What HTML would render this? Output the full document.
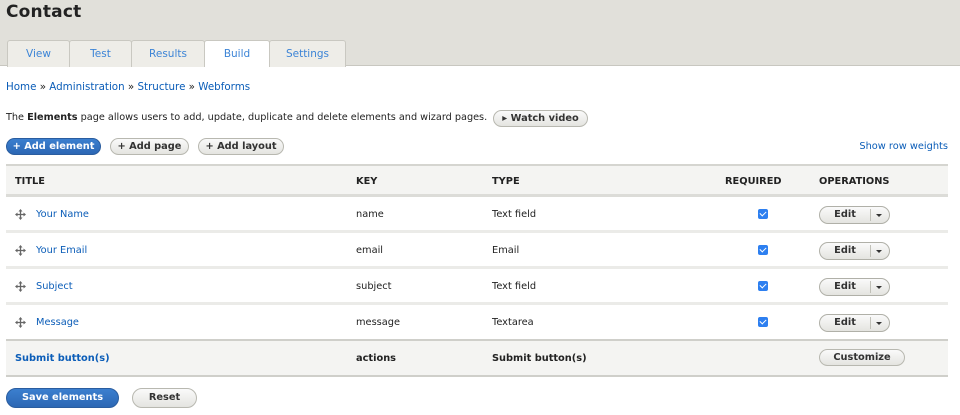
<!DOCTYPE html>
<html><head><meta charset="utf-8"><style>
*{margin:0;padding:0;box-sizing:border-box}
body{width:960px;height:415px;overflow:hidden;background:#fff;font-family:"DejaVu Sans","Liberation Sans",sans-serif;font-size:9.8px;color:#222;position:relative}
.a{position:absolute}
a,.lnk{color:#0b5db8;text-decoration:none}
.hdr{left:0;top:0;width:960px;height:66px;background:#e1e0da;border-bottom:1px solid #c8c7c0}
h1{position:absolute;left:6px;top:2px;font-size:17px;font-weight:bold;color:#222;letter-spacing:0.2px}
.tab{position:absolute;top:40px;height:27px;background:#eeede8;border:1px solid #c9c8c1;border-bottom:none;border-radius:3px 3px 0 0;color:#3c84d6;font-size:10.5px;text-align:center;line-height:26px}
.tab.on{background:#fff;top:40px;height:27px;color:#3c84d6}
.btn{position:absolute;height:17px;border:1px solid #b8b8b0;border-radius:9px;background:linear-gradient(#fafafa,#e4e4e0);font-weight:bold;font-size:9.8px;text-align:center;line-height:16px;color:#333;white-space:nowrap}
.blue{background:linear-gradient(#3b7fcf,#2c67b4);border-color:#2a5d9f;color:#fff}
.row{position:absolute;left:6px;width:942px;height:36px;border-bottom:3px solid #ebebe8}
.c{position:absolute;top:12px}
.chk{position:absolute;left:752px;top:12px;width:10px;height:10px;background:#2d7ff0;border-radius:2px}
.chk:after{content:"";position:absolute;left:3px;top:1px;width:3px;height:5px;border:solid #fff;border-width:0 1.5px 1.5px 0;transform:rotate(45deg)}
.edit{position:absolute;left:813px;top:9px;width:71px;height:18px;border:1px solid #b0b0a8;border-radius:9px;background:linear-gradient(#fafafa,#e4e4e0);font-weight:bold;color:#333}
.edit span{position:absolute;left:0;width:50px;text-align:center;top:2px}
.edit i{position:absolute;left:50px;top:2px;height:12px;border-left:1px solid #c0c0b8}
.edit b{position:absolute;left:56px;top:7px;border:3px solid transparent;border-top:3px solid #333;border-bottom:0}
.drag{position:absolute;left:9px;top:12px;width:11px;height:11px}
</style></head><body>
<div class="a hdr"><h1>Contact</h1>
<div class="tab" style="left:7px;width:63px">View</div>
<div class="tab" style="left:69px;width:63px">Test</div>
<div class="tab" style="left:131px;width:74px">Results</div>
<div class="tab on" style="left:204px;width:66px">Build</div>
<div class="tab" style="left:269px;width:77px">Settings</div>
</div>
<div class="a" style="left:6px;top:81px;font-size:10.3px"><a>Home</a> » <a>Administration</a> » <a>Structure</a> » <a>Webforms</a></div>
<div class="a" style="left:6px;top:112px;white-space:nowrap;font-size:9.7px">The <b>Elements</b> page allows users to add, update, duplicate and delete elements and wizard pages.</div>
<div class="btn" style="left:493px;top:110px;width:95px">▸ Watch video</div>
<div class="btn blue" style="left:6px;top:138px;width:95px">+ Add element</div>
<div class="btn" style="left:110px;top:138px;width:79px">+ Add page</div>
<div class="btn" style="left:198px;top:138px;width:86px">+ Add layout</div>
<div class="a lnk" style="right:12px;top:141px">Show row weights</div>
<div class="a" style="left:6px;top:164px;width:942px;height:33px;background:#f4f4f2;border-top:2px solid #d5d5d0;border-bottom:3px solid #dcdcd8;font-weight:bold">
<div class="c" style="left:9px;top:10px">TITLE</div><div class="c" style="left:350px;top:10px">KEY</div><div class="c" style="left:486px;top:10px">TYPE</div><div class="c" style="left:719px;top:10px">REQUIRED</div><div class="c" style="left:813px;top:10px">OPERATIONS</div></div>
<svg width="0" height="0" style="position:absolute"><defs><symbol id="d" viewBox="0 0 11 11"><path d="M5.5 0L3.5 2.5H7.5ZM5.5 11L3.5 8.5H7.5ZM0 5.5L2.5 3.5V7.5ZM11 5.5L8.5 3.5V7.5Z" fill="#666"/><path d="M5.5 2v7M2 5.5h7" stroke="#666" stroke-width="1.3"/></symbol></defs></svg>
<div class="row" style="top:197px"><svg class="drag"><use href="#d"/></svg><div class="c lnk" style="left:30px">Your Name</div><div class="c" style="left:350px">name</div><div class="c" style="left:486px">Text field</div><div class="chk"></div><div class="edit"><span>Edit</span><i></i><b></b></div></div>
<div class="row" style="top:233px"><svg class="drag"><use href="#d"/></svg><div class="c lnk" style="left:30px">Your Email</div><div class="c" style="left:350px">email</div><div class="c" style="left:486px">Email</div><div class="chk"></div><div class="edit"><span>Edit</span><i></i><b></b></div></div>
<div class="row" style="top:269px"><svg class="drag"><use href="#d"/></svg><div class="c lnk" style="left:30px">Subject</div><div class="c" style="left:350px">subject</div><div class="c" style="left:486px">Text field</div><div class="chk"></div><div class="edit"><span>Edit</span><i></i><b></b></div></div>
<div class="row" style="top:305px;border-bottom:2px solid #cfcfca"><svg class="drag"><use href="#d"/></svg><div class="c lnk" style="left:30px">Message</div><div class="c" style="left:350px">message</div><div class="c" style="left:486px">Textarea</div><div class="chk"></div><div class="edit"><span>Edit</span><i></i><b></b></div></div>
<div class="a" style="left:6px;top:341px;width:942px;height:36px;background:#f4f4f2;border-bottom:2px solid #cfcfca;font-weight:bold">
<div class="c lnk" style="left:9px">Submit button(s)</div><div class="c" style="left:350px">actions</div><div class="c" style="left:486px">Submit button(s)</div>
<div class="btn" style="left:813px;top:8px;width:86px">Customize</div></div>
<div class="btn blue" style="left:6px;top:388px;width:113px;height:20px;line-height:18px;border-radius:10px">Save elements</div>
<div class="btn" style="left:132px;top:388px;width:65px;height:20px;line-height:18px;border-radius:10px">Reset</div>
</body></html>
